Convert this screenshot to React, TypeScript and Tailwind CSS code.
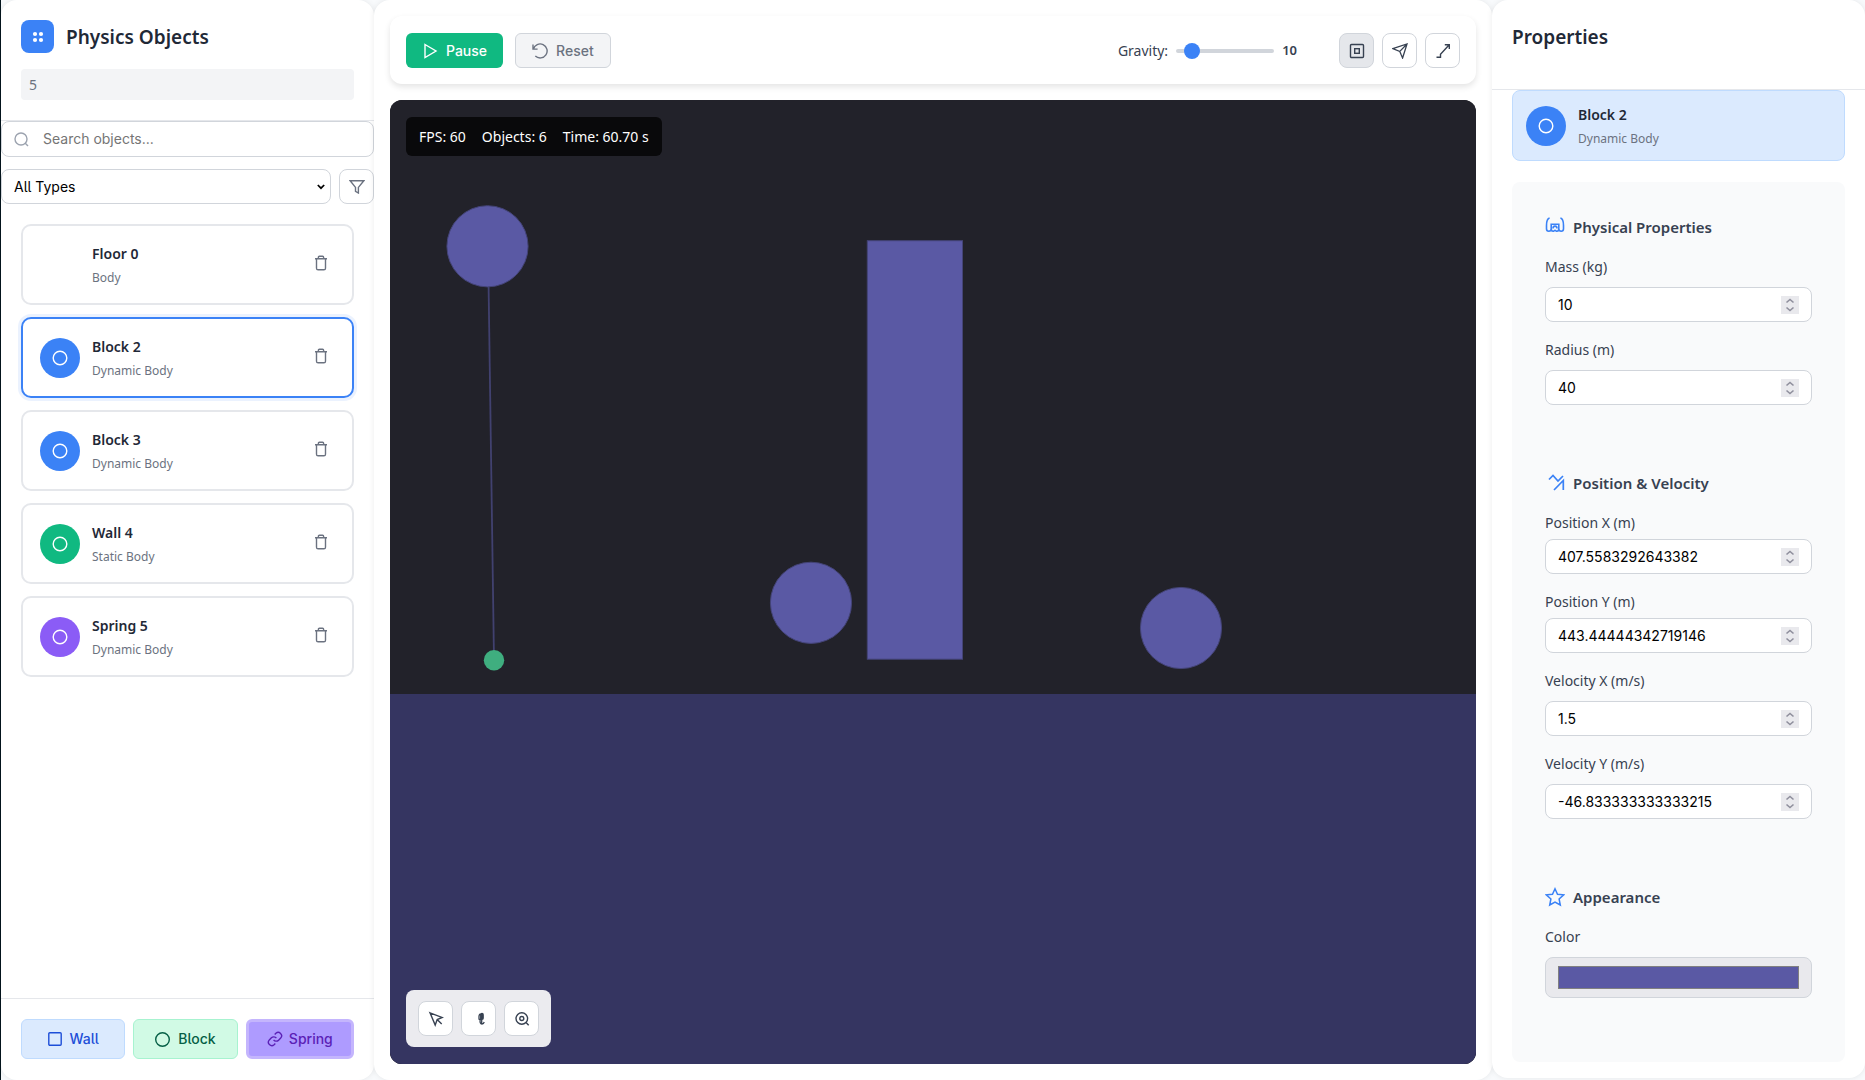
import { useState, type ReactNode } from "react";

type BodyItem = { id: string; name: string; kind: string; color: string };

const items: BodyItem[] = [
  { id: "floor-0", name: "Floor 0", kind: "Body", color: "bg-transparent" },
  { id: "block-2", name: "Block 2", kind: "Dynamic Body", color: "bg-[#3b82f6]" },
  { id: "block-3", name: "Block 3", kind: "Dynamic Body", color: "bg-[#3b82f6]" },
  { id: "wall-4", name: "Wall 4", kind: "Static Body", color: "bg-[#10b981]" },
  { id: "spring-5", name: "Spring 5", kind: "Dynamic Body", color: "bg-[#8b5cf6]" },
];

const control = "font-['Inter',sans-serif] text-sm [font-feature-settings:'cv05']";

function Icon({ w, h, sw = 1.4, children }: { w: number; h: number; sw?: number; children: ReactNode }) {
  return (
    <svg width={w} height={h} viewBox={`0 0 ${w} ${h}`} fill="none" stroke="currentColor" strokeWidth={sw} className="shrink-0" aria-hidden="true">
      {children}
    </svg>
  );
}

function Avatar({ color }: { color: string }) {
  return (
    <div className={`flex size-10 shrink-0 items-center justify-center rounded-full text-white ${color}`}>
      <Icon w={16} h={16}>
        <circle cx="8" cy="8" r="6.8" />
      </Icon>
    </div>
  );
}

function ItemText({ name, kind }: { name: string; kind: string }) {
  return (
    <div className="flex min-w-0 flex-1 flex-col gap-1 pt-0.5">
      <div className="text-sm leading-5 font-semibold text-[#1f2937]">{name}</div>
      <div className="text-xs leading-5 text-[#6b7280]">{kind}</div>
    </div>
  );
}

function ObjectCard({ item, selected }: { item: BodyItem; selected: boolean }) {
  const look = selected ? "border-[#3b82f6] ring-3 ring-[#3b82f6]/10" : "border-[#e5e7eb]";
  return (
    <li className={`flex h-[81px] items-center gap-3 rounded-[10px] border-2 bg-white px-[17px] ${look}`}>
      <Avatar color={item.color} />
      <ItemText name={item.name} kind={item.kind} />
      <button type="button" aria-label={`Delete ${item.name}`} className="mb-1 flex size-7 items-center justify-center text-[#6b7280]">
        <Icon w={12} h={16}>
          <path d="M0 3.7h12M1.5 3.7v9.5a1.6 1.6 0 0 0 1.6 1.6h5.8a1.6 1.6 0 0 0 1.6-1.6V3.7M3.4 3.5V2.3a1 1 0 0 1 1-1h3.2a1 1 0 0 1 1 1v1.2" />
        </Icon>
      </button>
    </li>
  );
}

function NumberField({ id, label, value, tight }: { id: string; label: string; value: string; tight?: boolean }) {
  return (
    <div className={`flex flex-col ${tight ? "gap-1.5" : "gap-2.5"}`}>
      <label htmlFor={id} className="text-sm leading-5 text-[#374151]">{label}</label>
      <div className="flex h-[35px] items-center rounded-lg border border-[#d1d5db] bg-white px-3">
        <input
          id={id}
          type="number"
          step="any"
          defaultValue={value}
          className={`min-w-0 flex-1 appearance-none bg-transparent text-black outline-none [-moz-appearance:textfield] [&::-webkit-inner-spin-button]:appearance-none ${control}`}
        />
        <div className="flex size-[18px] items-center justify-center bg-[#e9e9ed] text-[#8f8f9d]">
          <Icon w={10} h={14} sw={1.6}>
            <path d="M1.5 4.5 5 1.5l3.5 3M1.5 9.5l3.5 3 3.5-3" />
          </Icon>
        </div>
      </div>
    </div>
  );
}

function Section({ title, icon, children }: { title: string; icon: ReactNode; children: ReactNode }) {
  return (
    <section className="flex flex-col gap-[18px]">
      <h3 className="flex items-center gap-2 text-[15px] leading-6 font-semibold text-[#374151]">
        <span className="flex w-5 justify-center text-[#3b82f6]">{icon}</span>
        {title}
      </h3>
      {children}
    </section>
  );
}

function ToolButton({ label, active, children }: { label: string; active?: boolean; children: ReactNode }) {
  return (
    <button type="button" aria-label={label} className={`flex size-[35px] items-center justify-center rounded-lg border border-[#d1d5db] text-[#374151] ${active ? "bg-[#e5e7eb]" : "bg-white"}`}>
      {children}
    </button>
  );
}

function LeftPanel() {
  return (
    <aside className="flex w-[373px] shrink-0 flex-col rounded-2xl bg-white shadow-[0_0_6px_rgba(0,0,0,0.08)]">
      <header className="flex flex-col gap-4 border-b border-[#e5e7eb] px-5 py-5">
        <div className="flex items-center gap-3">
          <div className="flex size-[33px] items-center justify-center rounded-lg bg-[#3b82f6]">
            <svg width="12" height="12" viewBox="0 0 12 12" fill="#fff" aria-hidden="true">
              <circle cx="3" cy="3" r="2.1" />
              <circle cx="9" cy="3" r="2.1" />
              <circle cx="3" cy="9" r="2.1" />
              <circle cx="9" cy="9" r="2.1" />
            </svg>
          </div>
          <h1 className="text-[19px] leading-8 font-semibold text-[#1f2937]">Physics Objects</h1>
        </div>
        <div className="h-[31px] rounded bg-[#f3f4f6] px-2 text-sm leading-[31px] text-[#6b7280]">5</div>
      </header>
      <div className="flex flex-col gap-3">
        <div className="flex h-9 items-center gap-3.5 rounded-lg border border-[#d1d5db] px-3">
          <span className="text-[#9ca3af]">
            <Icon w={15} h={15}>
              <circle cx="7" cy="7" r="6" />
              <path d="m11 11 3 3" />
            </Icon>
          </span>
          <input type="search" aria-label="Search objects" placeholder="Search objects..." className={`min-w-0 flex-1 outline-none placeholder:text-[#757575] ${control}`} />
        </div>
        <div className="flex gap-2">
          <div className="relative flex-1">
            <select aria-label="Object type" className={`h-[35px] w-full appearance-none rounded-lg border border-[#d1d5db] bg-white px-3 text-black ${control}`}>
              <option>All Types</option>
              <option>Dynamic Body</option>
              <option>Static Body</option>
            </select>
            <span className="pointer-events-none absolute top-3.5 right-1.5 text-black">
              <Icon w={8} h={8} sw={1.7}>
                <path d="m.8 2 3.2 3.2L7.2 2" />
              </Icon>
            </span>
          </div>
          <button type="button" aria-label="Filter" className="flex size-[35px] items-center justify-center rounded-lg border border-[#d1d5db] text-[#6b7280]">
            <Icon w={16} h={14}>
              <path d="M1.2 .8h13.6L9.4 7.4V13l-2.9-1.6v-4z" />
            </Icon>
          </button>
        </div>
      </div>
      <ul className="flex flex-1 flex-col gap-3 p-5">
        {items.map((item) => (
          <ObjectCard key={item.id} item={item} selected={item.id === "block-2"} />
        ))}
      </ul>
      <footer className="flex gap-2 border-t border-[#e5e7eb] px-5 pt-5 pb-[21px]">
        <button type="button" className={`flex h-10 flex-1 items-center justify-center gap-2 rounded-md border border-[#bfdbfe] bg-[#dbeafe] font-medium text-[#1d4ed8] ${control}`}>
          <Icon w={14} h={14}>
            <rect x=".8" y=".8" width="12.4" height="12.4" rx="1" />
          </Icon>
          Wall
        </button>
        <button type="button" className={`flex h-10 flex-1 items-center justify-center gap-2 rounded-md border border-[#a7f3d0] bg-[#d1fae5] font-medium text-[#065f46] ${control}`}>
          <Icon w={15} h={15}>
            <circle cx="7.5" cy="7.5" r="6.8" />
          </Icon>
          Block
        </button>
        <button type="button" className={`flex h-10 flex-1 items-center justify-center gap-1.5 rounded-md border-3 border-[#c4b5fd] bg-[#ae9bff] font-medium text-[#5b21b6] ${control}`}>
          <Icon w={16} h={16}>
            <path d="M6.6 8.8a3.3 3.3 0 0 0 5 .4l2.1-2.1a3.4 3.4 0 0 0-4.8-4.8L7.7 3.5M9.4 7.2a3.3 3.3 0 0 0-5-.4L2.3 8.9a3.4 3.4 0 0 0 4.8 4.8l1.2-1.2" />
          </Icon>
          Spring
        </button>
      </footer>
    </aside>
  );
}

function Toolbar() {
  const [gravity, setGravity] = useState(10);
  return (
    <div className="flex items-center justify-between rounded-xl bg-white px-4 pt-[17px] pb-4 shadow-[0_3px_6px_rgba(0,0,0,0.11)]">
      <div className="flex gap-3">
        <button type="button" className={`flex h-[35px] items-center gap-2 rounded-md bg-[#10b981] px-4 font-medium text-white ${control}`}>
          <Icon w={16} h={16}>
            <path d="m3 1.5 11 6.5-11 6.5z" />
          </Icon>
          Pause
        </button>
        <button type="button" className={`flex h-[35px] items-center gap-2 rounded-md border border-[#d1d5db] bg-[#f3f4f6] px-4 font-medium text-[#6b7280] ${control}`}>
          <Icon w={16} h={16}>
            <path d="M1 1.5v4.6h4.6M1.4 6A7 7 0 1 1 3.3 13" />
          </Icon>
          Reset
        </button>
      </div>
      <div className="flex items-center gap-[42px]">
        <div className="flex items-center gap-2">
          <label htmlFor="gravity" className="text-sm text-[#374151]">Gravity:</label>
          <input
            id="gravity"
            type="range"
            min={0}
            max={100}
            value={gravity}
            onChange={(e) => setGravity(Number(e.target.value))}
            className="h-1 w-[98px] appearance-none rounded-full bg-[#d1d5db] [&::-webkit-slider-thumb]:size-4 [&::-webkit-slider-thumb]:appearance-none [&::-webkit-slider-thumb]:rounded-full [&::-webkit-slider-thumb]:bg-[#3b82f6]"
          />
          <output htmlFor="gravity" className="text-[13px] font-semibold text-[#374151]">{gravity}</output>
        </div>
        <div className="flex gap-2">
          <ToolButton label="Toggle bounds" active>
            <Icon w={16} h={16}>
              <rect x="1.5" y="1.5" width="13" height="13" rx="1" />
              <rect x="5.7" y="5.7" width="4.6" height="4.6" />
            </Icon>
          </ToolButton>
          <ToolButton label="Toggle vectors">
            <Icon w={16} h={16} sw={1.3}>
              <path d="M.8 5.7 15 1 10.6 15 7.8 8.4zM7.8 8.4 15 1M7.8 8.4l1.2 2.8" />
            </Icon>
          </ToolButton>
          <ToolButton label="Toggle trajectories">
            <Icon w={16} h={16}>
              <path d="M1.5 14.2h4v-3L14 2M9.8 1.7h4.5v4.4" />
            </Icon>
          </ToolButton>
        </div>
      </div>
    </div>
  );
}

function Scene() {
  return (
    <div className="relative flex flex-1 overflow-hidden rounded-xl bg-[#22222a]">
      <svg viewBox="0 0 1086 964" preserveAspectRatio="xMidYMid slice" className="h-full w-full" role="img" aria-label="Simulation">
        <rect x="0" y="0" width="1086" height="964" fill="#22222a" />
        <rect x="0" y="594" width="1086" height="370" fill="#353561" />
        <line x1="98" y1="146" x2="104" y2="560" stroke="#41416f" strokeWidth="1.8" />
        <g fill="#5a59a4" stroke="#444477" strokeWidth="1">
          <circle cx="97.5" cy="146.3" r="40.6" />
          <circle cx="421" cy="502.8" r="40.6" />
          <circle cx="791" cy="528" r="40.6" />
          <rect x="477.3" y="140.7" width="95.2" height="418.5" />
        </g>
        <circle cx="104" cy="560.3" r="10.2" fill="#3fae7f" />
      </svg>
      <div className="absolute top-[17px] left-4 flex h-[39px] items-center gap-4 rounded-md bg-[#09090b] px-[13px] text-sm text-white">
        <span>FPS: 60</span>
        <span>Objects: 6</span>
        <span>Time: 60.70 s</span>
      </div>
      <div className="absolute bottom-[17px] left-4 flex gap-2 rounded-lg bg-[#ebebef] px-3 py-[11px]">
        <ToolButton label="Select">
          <Icon w={16} h={16}>
            <path d="M2 1.8 14.3 6.5 9.2 8.6 7.2 14zM9.4 8.8l4.3 4.2" />
          </Icon>
        </ToolButton>
        <ToolButton label="Pan">
          <Icon w={16} h={16} sw={1.3}>
            <path d="M8 8.2V5.4c0-1.500.8-2.400 1.700-2.400M9.700 8.200V3.800c0-1 .6-1.500 1.300-1.500s1.200.6 1.200 1.500v3.400c0 .8-.8 1.200-1.700 1.200H7.600M11 2.500v5.500M9.300 8.400c-.6 2.600 0 4.600 1.700 4.600 1.200 0 1.900-.8 2.200-2M10.700 8.400v3.800" />
          </Icon>
        </ToolButton>
        <ToolButton label="Zoom">
          <Icon w={16} h={16}>
            <circle cx="7.8" cy="7.5" r="5.8" />
            <circle cx="7.8" cy="7.5" r="2" />
            <path d="m12 11.500 2.700 2.700" />
          </Icon>
        </ToolButton>
      </div>
    </div>
  );
}

function PropertiesPanel() {
  return (
    <aside className="mb-0.5 flex w-[373px] shrink-0 flex-col rounded-2xl bg-white shadow-[0_0_6px_rgba(0,0,0,0.08)]">
      <header className="h-[90px] border-b border-[#e5e7eb] px-5 pt-[21px]">
        <h2 className="text-[19px] leading-8 font-semibold text-[#1f2937]">Properties</h2>
      </header>
      <div className="flex flex-1 flex-col gap-[21px] px-5 pb-4">
        <div className="flex h-[71px] items-center gap-3 rounded-lg border border-[#bfdbfe] bg-[#dbeafe] px-[13px]">
          <Avatar color="bg-[#3b82f6]" />
          <ItemText name="Block 2" kind="Dynamic Body" />
        </div>
        <form className="flex flex-1 flex-col gap-[66px] rounded-lg bg-[#f9fafb] px-[33px] pt-[33px]" onSubmit={(e) => e.preventDefault()}>
          <Section
            title="Physical Properties"
            icon={
              <Icon w={20} h={20} sw={1.6}>
                <path d="M4.600 1C2.400 1.500 1.500 4.500 1.500 8.500v3.300c0 1.500.8 2.400 2.300 2.400s2.400-.9 2.400-2.400V7.300h7.600v4.500c0 1.500.9 2.400 2.400 2.400s2.300-.9 2.300-2.400V8.500c0-4-.9-7-3.100-7.500M6.200 11.800c0 1.500.8 2.400 1.900 2.400.9 0 1-.8 1.900-.8s1 .8 1.900.8c1.100 0 1.900-.9 1.900-2.400M8 11.500c0-2 .8-2.400 2-2.400s2 .4 2 2.400" />
              </Icon>
            }
          >
            <NumberField id="mass" label="Mass (kg)" value="10" />
            <NumberField id="radius" label="Radius (m)" value="40" />
          </Section>
          <Section
            title="Position & Velocity"
            icon={
              <Icon w={20} h={20} sw={1.7}>
                <path d="m4 6.500 4-4 5 5.500 5-5M9 17l9.300-9.500V17" />
              </Icon>
            }
          >
            <NumberField id="pos-x" label="Position X (m)" value="407.5583292643382" tight />
            <NumberField id="pos-y" label="Position Y (m)" value="443.44444342719146" tight />
            <NumberField id="vel-x" label="Velocity X (m/s)" value="1.5" />
            <NumberField id="vel-y" label="Velocity Y (m/s)" value="-46.833333333333215" />
          </Section>
          <Section
            title="Appearance"
            icon={
              <Icon w={20} h={20} sw={1.5}>
                <path d="m10 1.800 2.500 5.500 6.200.5-4.600 4.200 1.200 6-5.300-2.900L4.700 18l1.200-6L1.300 7.800l6.200-.5z" />
              </Icon>
            }
          >
            <div className="flex flex-col gap-2.5">
              <label htmlFor="color" className="text-sm leading-5 text-[#374151]">Color</label>
              <input
                id="color"
                type="color"
                defaultValue="#5a59a4"
                className="h-[41px] w-full appearance-none rounded-lg border border-[#d1d5db] bg-[#e9e9ed] px-3 py-2 [&::-webkit-color-swatch]:rounded-none [&::-webkit-color-swatch]:border [&::-webkit-color-swatch]:border-[#808080] [&::-webkit-color-swatch-wrapper]:p-0"
              />
            </div>
          </Section>
        </form>
      </div>
    </aside>
  );
}

export default function App() {
  return (
    <div className="flex min-h-screen border-l border-[#04141c] bg-[#f8fafc] font-['Noto_Sans',sans-serif]">
      <LeftPanel />
      <main className="flex min-w-0 flex-1 flex-col gap-4 rounded-2xl bg-white p-4 shadow-[0_0_6px_rgba(0,0,0,0.08)]">
        <Toolbar />
        <Scene />
      </main>
      <PropertiesPanel />
    </div>
  );
}
